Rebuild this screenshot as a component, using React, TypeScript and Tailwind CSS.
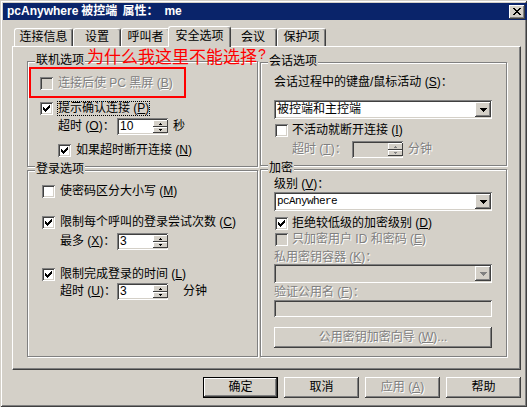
import React from 'react';

const sunken =
  'shadow-[inset_1px_1px_0_#808080,inset_-1px_-1px_0_#ffffff,inset_2px_2px_0_#404040,inset_-2px_-2px_0_#d4d0c8]';
const raised =
  'shadow-[inset_-1px_-1px_0_#404040,inset_1px_1px_0_#ffffff,inset_-2px_-2px_0_#808080,inset_2px_2px_0_#d4d0c8]';
const raised1 = 'shadow-[inset_-1px_-1px_0_#404040,inset_1px_1px_0_#ffffff]';
const dis = 'text-[#808080] [text-shadow:1px_1px_0_#ffffff]';

function M({ c }: { c: string }) {
  return <span className="underline underline-offset-[1px]">{c}</span>;
}

function Check({ checked, disabled }: { checked?: boolean; disabled?: boolean }) {
  return (
    <span
      className={`w-[13px] h-[13px] shrink-0 flex items-center justify-center ${sunken} ${
        disabled ? 'bg-[#d4d0c8]' : 'bg-white'
      }`}
    >
      {checked && (
        <svg width="7" height="7" viewBox="0 0 7 7" className="block" shapeRendering="crispEdges">
          <path
            d="M6 0h1v1h-1z M5 1h2v1h-2z M0 2h1v1h-1z M4 2h3v1h-3z M0 3h2v1h-2z M3 3h3v1h-3z M0 4h5v1h-5z M1 5h3v1h-3z M2 6h1v1h-1z"
            fill="#000"
          />
        </svg>
      )}
    </span>
  );
}

function Spin({ value, disabled }: { value?: string; disabled?: boolean }) {
  const c = disabled ? '#808080' : '#000';
  return (
    <div
      className={`w-[51px] h-[17px] pl-[2px] py-[2px] pr-0 flex ${sunken} ${
        disabled ? 'bg-[#d4d0c8]' : 'bg-white'
      }`}
    >
      <div className="flex-1 pl-[1px] leading-[13px]">{value}</div>
      <div className="w-[15px] flex flex-col">
        <div className={`h-[7px] bg-[#d4d0c8] ${raised1} flex items-center justify-center`}>
          <svg width="3" height="2" viewBox="0 0 3 2" className="block" shapeRendering="crispEdges">
            <path d="M1 0h1v1h-1z M0 1h3v1h-3z" fill={c} />
          </svg>
        </div>
        <div className={`h-[6px] bg-[#d4d0c8] ${raised1} flex items-center justify-center`}>
          <svg width="3" height="2" viewBox="0 0 3 2" className="block" shapeRendering="crispEdges">
            <path d="M0 0h3v1h-3z M1 1h1v1h-1z" fill={c} />
          </svg>
        </div>
      </div>
    </div>
  );
}

function Select({ value, disabled, mono }: { value?: string; disabled?: boolean; mono?: boolean }) {
  return (
    <div
      className={`w-[218px] h-[19px] py-[2px] pl-[2px] pr-[1px] flex ${sunken} ${
        disabled ? 'bg-[#d4d0c8]' : 'bg-white'
      }`}
    >
      <div
        className={`flex-1 pl-[1px] leading-[15px] ${
          mono ? "font-['Liberation_Mono'] text-[11px] tracking-[-0.6px]" : ''
        }`}
      >
        {value}
      </div>
      <div className={`w-[16px] h-[15px] bg-[#d4d0c8] ${raised} flex items-center justify-center`}>
        <svg width="7" height="4" viewBox="0 0 7 4" className="block" shapeRendering="crispEdges">
          <path
            d="M0 0h7v1h-7z M1 1h5v1h-5z M2 2h3v1h-3z M3 3h1v1h-1z"
            fill={disabled ? '#808080' : '#000'}
          />
        </svg>
      </div>
    </div>
  );
}

function Group({
  label,
  className,
  children,
}: {
  label: string;
  className?: string;
  children?: React.ReactNode;
}) {
  return (
    <div
      className={`relative flex flex-col border border-[#808080] shadow-[inset_1px_1px_0_#ffffff,1px_1px_0_#ffffff] ${className}`}
    >
      <span className="absolute left-[7px] top-[-8px] px-[1px] bg-[#d4d0c8] leading-[13px] whitespace-nowrap">
        {label}
      </span>
      {children}
    </div>
  );
}

const tabs = [
  { t: '连接信息', w: 59 },
  { t: '设置', w: 48 },
  { t: '呼叫者', w: 49 },
  { t: '安全选项', w: 59, sel: true },
  { t: '会议', w: 48 },
  { t: '保护项', w: 49 },
];

function Btn({
  children,
  def,
  disabled,
}: {
  children: React.ReactNode;
  def?: boolean;
  disabled?: boolean;
}) {
  if (def) {
    return (
      <div className="w-[75px] h-[21px] border border-black">
        <div className={`w-full h-full ${raised} flex items-center justify-center leading-[13px]`}>
          {children}
        </div>
      </div>
    );
  }
  return (
    <div
      className={`w-[75px] h-[21px] ${raised} flex items-center justify-center leading-[13px] ${
        disabled ? dis : ''
      }`}
    >
      {children}
    </div>
  );
}

export default function App() {
  return (
    <div className="relative w-[527px] h-[407px] overflow-hidden bg-[#d4d0c8] text-[12px] leading-[13px] text-black font-['Liberation_Sans','Noto_Sans_CJK_SC',sans-serif] shadow-[inset_1px_1px_0_#d4d0c8,inset_-1px_-1px_0_#404040,inset_2px_2px_0_#ffffff,inset_-2px_-2px_0_#808080]">
      {/* title bar */}
      <div className="mt-[3px] ml-[3px] w-[524px] h-[17px] bg-[#0a246a] flex items-center text-white font-bold text-[12px] leading-[13px] whitespace-nowrap">
        <span className="ml-[4px]">pcAnywhere</span>
        <span className="ml-[3px]">被控端</span>
        <span className="ml-[5px]">属性：</span>
        <span className="ml-[6px]">me</span>
        <div className={`ml-auto mr-[2px] w-[16px] h-[14px] bg-[#d4d0c8] ${raised} flex items-center justify-center`}>
          <svg width="8" height="7" viewBox="0 0 8 7" className="block" shapeRendering="crispEdges">
            <path
              d="M0 0h2v1h-2z M6 0h2v1h-2z M1 1h2v1h-2z M5 1h2v1h-2z M2 2h4v1h-4z M3 3h2v1h-2z M2 4h4v1h-4z M1 5h2v1h-2z M5 5h2v1h-2z M0 6h2v1h-2z M6 6h2v1h-2z"
              fill="#000"
            />
          </svg>
        </div>
      </div>

      {/* tabs */}
      <div className="mt-[6px] ml-[14px] h-[20px] flex items-end">
        {tabs.map((tb) =>
          tb.sel ? (
            <div
              key={tb.t}
              className="relative z-10 -mx-[2px] -mb-[1px] w-[63px] h-[21px] pb-[2px] bg-[#d4d0c8] border-t border-l border-t-white border-l-white border-r border-r-[#404040] shadow-[inset_-1px_0_0_#808080] rounded-t-[3px] flex items-center justify-center whitespace-nowrap"
            >
              {tb.t}
            </div>
          ) : (
            <div
              key={tb.t}
              style={{ width: tb.w }}
              className="h-[18px] border-t border-l border-t-white border-l-white border-r border-r-[#404040] shadow-[inset_-1px_0_0_#808080] rounded-t-[3px] flex items-center justify-center whitespace-nowrap"
            >
              {tb.t}
            </div>
          )
        )}
      </div>

      {/* panel */}
      <div className="ml-[12px] w-[509px] h-[324px] border-t border-l border-t-white border-l-white border-r border-b border-r-[#404040] border-b-[#404040] shadow-[inset_-1px_-1px_0_#808080] flex pt-[14px] pl-[14px]">
        {/* left column */}
        <div className="w-[231px] flex flex-col">
          <Group label="联机选项" className="w-[231px] h-[106px] pl-[12px]">
            <div className="mt-[15px] h-[13px] flex items-center gap-[5px]">
              <Check disabled />
              <span className={dis}>
                连接后使 PC 黑屏 (<M c="B" />)
              </span>
            </div>
            <div className="mt-[11px] h-[15px] flex items-center gap-[5px]">
              <Check checked />
              <span className="[outline:1px_dotted_#000] leading-[13px]">
                提示确认连接 (<M c="P" />)
              </span>
            </div>
            <div className="mt-[2px] h-[17px] flex items-center pl-[18px]">
              <span className="w-[59px]">
                超时 (<M c="O" />)：
              </span>
              <Spin value="10" />
              <span className="ml-[5px]">秒</span>
            </div>
            <div className="mt-[9px] h-[13px] flex items-center gap-[5px] pl-[18px]">
              <Check checked />
              <span>
                如果超时断开连接 (<M c="N" />)
              </span>
            </div>
          </Group>

          <Group label="登录选项" className="mt-[3px] w-[231px] h-[187px] pl-[14px]">
            <div className="mt-[14px] h-[13px] flex items-center gap-[5px]">
              <Check />
              <span>
                使密码区分大小写 (<M c="M" />)
              </span>
            </div>
            <div className="mt-[18px] h-[13px] flex items-center gap-[5px]">
              <Check checked />
              <span>
                限制每个呼叫的登录尝试次数 (<M c="C" />)
              </span>
            </div>
            <div className="mt-[4px] h-[17px] flex items-center pl-[18px]">
              <span className="w-[57px]">
                最多 (<M c="X" />)：
              </span>
              <Spin value="3" />
            </div>
            <div className="mt-[18px] h-[13px] flex items-center gap-[5px]">
              <Check checked />
              <span>
                限制完成登录的时间 (<M c="L" />)
              </span>
            </div>
            <div className="mt-[2px] h-[17px] flex items-center pl-[18px]">
              <span className="w-[57px]">
                超时 (<M c="U" />)：
              </span>
              <Spin value="3" />
              <span className="ml-[15px]">分钟</span>
            </div>
          </Group>
        </div>

        {/* right column */}
        <div className="ml-[2px] w-[247px] flex flex-col">
          <Group label="会话选项" className="mt-[1px] w-[247px] h-[104px] pl-[13px]">
            <div className="mt-[13px] h-[13px] flex items-center whitespace-nowrap">
              会话过程中的键盘/鼠标活动 (<M c="S" />)：
            </div>
            <div className="mt-[11px]">
              <Select value="被控端和主控端" />
            </div>
            <div className="mt-[5px] ml-[1px] h-[13px] flex items-center gap-[4px]">
              <Check />
              <span>
                不活动就断开连接 (<M c="I" />)
              </span>
            </div>
            <div className="mt-[4px] h-[17px] flex items-center pl-[18px]">
              <span className={`w-[60px] ${dis}`}>
                超时 (<M c="T" />)：
              </span>
              <Spin disabled />
              <span className={`ml-[5px] ${dis}`}>分钟</span>
            </div>
          </Group>

          <Group label="加密" className="mt-[3px] w-[247px] h-[188px] pl-[13px]">
            <div className="mt-[8px] h-[13px] flex items-center">
              级别 (<M c="V" />)：
            </div>
            <div className="mt-[1px]">
              <Select value="pcAnywhere" mono />
            </div>
            <div className="mt-[6px] ml-[1px] h-[13px] flex items-center gap-[4px]">
              <Check checked />
              <span>
                拒绝较低级的加密级别 (<M c="D" />)
              </span>
            </div>
            <div className="mt-[3px] ml-[1px] h-[13px] flex items-center gap-[4px]">
              <Check disabled />
              <span className={dis}>
                只加密用户 ID 和密码 (<M c="E" />)
              </span>
            </div>
            <div className={`mt-[5px] h-[13px] flex items-center ${dis}`}>
              私用密钥容器 (<M c="K" />)：
            </div>
            <div>
              <Select disabled />
            </div>
            <div className={`mt-[3px] h-[13px] flex items-center ${dis}`}>
              验证公用名 (<M c="F" />)：
            </div>
            <div className={`mt-[1px] w-[218px] h-[17px] bg-[#d4d0c8] ${sunken}`} />
            <div
              className={`mt-[10px] w-[218px] h-[21px] ${raised} flex items-center justify-center ${dis}`}
            >
              公用密钥加密向导 (<M c="W" />)...
            </div>
          </Group>
        </div>
      </div>

      {/* buttons */}
      <div className="mt-[7px] ml-[203px] flex gap-[6px]">
        <Btn def>确定</Btn>
        <Btn>取消</Btn>
        <Btn disabled>
          应用 (<M c="A" />)
        </Btn>
        <Btn>帮助</Btn>
      </div>

      {/* red annotation (overlay) */}
      <div className="absolute left-[29px] top-[67px] w-[157px] h-[31px] border-2 border-[#ff0000] pointer-events-none" />
      <div className="absolute left-[87px] top-[47px] flex items-start text-[17px] leading-[18px] text-[#ff0000] font-['Noto_Sans_CJK_SC',sans-serif] whitespace-nowrap pointer-events-none">
        <span>为什么我这里不能选择</span>
        <span className="ml-[1px] text-[14px] leading-[14px] font-['Liberation_Sans',sans-serif]">?</span>
      </div>
    </div>
  );
}
